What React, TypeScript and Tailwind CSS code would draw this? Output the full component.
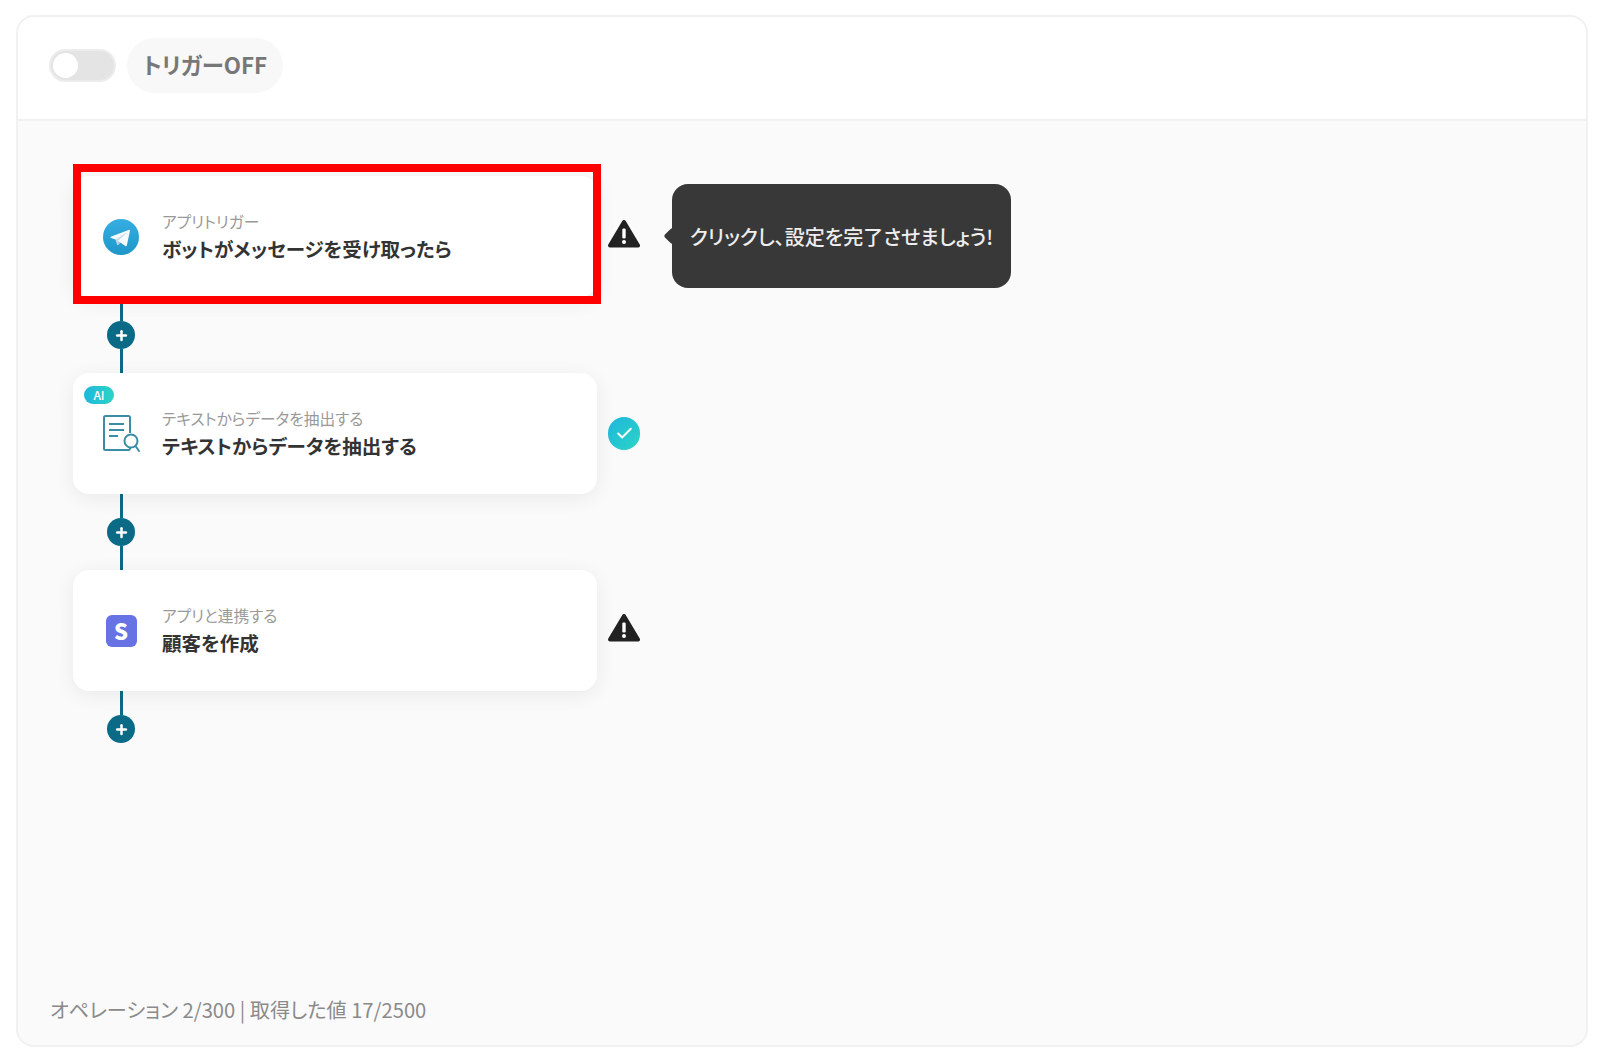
import { Check, Plus } from "lucide-react"
import type { ReactNode } from "react"

const TelegramIcon = () => (
  <svg width="36" height="36" viewBox="0 0 240 240">
    <defs>
      <linearGradient id="tg" x1="0.5" y1="0" x2="0.5" y2="1">
        <stop offset="0" stopColor="#37aee2" />
        <stop offset="1" stopColor="#1e96c8" />
      </linearGradient>
    </defs>
    <circle cx="120" cy="120" r="120" fill="url(#tg)" />
    <path fill="#c8daea" d="M98 175c-3.888 0-3.227-1.468-4.568-5.17L82 132.207 170 80" />
    <path fill="#a9c9dd" d="M98 175c3 0 4.325-1.372 6-3l16-15.558-19.958-12.035" />
    <path
      fill="#f6fbfe"
      d="M100.04 144.41l48.36 35.729c5.519 3.045 9.501 1.468 10.876-5.123l19.685-92.763c2.015-8.08-3.08-11.746-8.36-9.349l-115.59 44.571c-7.89 3.165-7.843 7.567-1.438 9.528l29.663 9.259 68.673-43.325c3.242-1.966 6.218-.91 3.776 1.258"
    />
  </svg>
)

const DocSearchIcon = () => (
  <svg width="38" height="40" viewBox="0 0 38 40" fill="none" stroke="#3d8ca5" strokeWidth="2">
    <path d="M28 19V3.500a1.500 1.500 0 0 0-1.500-1.500h-23A1.500 1.500 0 0 0 2 3.500v31A1.500 1.500 0 0 0 3.500 36h23a1.500 1.500 0 0 0 1.500-1.500V34" />
    <path d="M7 10h15M7 16h15M7 22h9" />
    <circle cx="29" cy="27" r="6.500" />
    <path d="M33.500 32L37 37" strokeLinecap="round" />
  </svg>
)

const StripeIcon = () => (
  <div className="flex h-8 w-[31px] items-center justify-center rounded-md bg-[#6772e5]">
    <span className="-mt-[2px] text-[22px] leading-none font-black text-white">S</span>
  </div>
)

const WarnIcon = () => (
  <svg width="32" height="30" viewBox="0 0 32 30">
    <path
      d="M16 3L30 26.500H2Z"
      fill="#222222"
      stroke="#222222"
      strokeWidth="4"
      strokeLinejoin="round"
    />
    <rect x="14.300" y="9.500" width="3.400" height="10" rx="1.200" fill="#ffffff" />
    <circle cx="16" cy="23" r="2" fill="#ffffff" />
  </svg>
)

const CheckBadge = () => (
  <div className="flex h-[33px] w-[33px] items-center justify-center rounded-full bg-gradient-to-br from-[#1fb6dc] to-[#2dd4c4]">
    <Check size={19} strokeWidth={2.5} className="text-white" />
  </div>
)

const Connector = ({ last }: { last?: boolean }) => (
  <div className={`ml-[34px] flex w-7 flex-col items-center ${last ? "h-[52px]" : "h-[76px]"}`}>
    <div className="h-6 w-[3px] bg-[#0b6a85]" />
    <div className="flex h-7 w-7 shrink-0 items-center justify-center rounded-full bg-[#0b6a85]">
      <Plus size={15} strokeWidth={4} className="text-white" />
    </div>
    {!last && <div className="w-[3px] flex-1 bg-[#0b6a85]" />}
  </div>
)

type StepProps = {
  icon: ReactNode
  label: string
  title: string
  badge?: boolean
  highlight?: boolean
  status: ReactNode
  children?: ReactNode
}

const Step = ({ icon, label, title, badge, highlight, status, children }: StepProps) => (
  <div className="flex items-center">
    <div className="relative flex h-[121px] w-[524px] rounded-2xl bg-white shadow-[0_4px_20px_rgba(0,0,0,0.07)]">
      {badge && (
        <div className="absolute top-[13px] left-[11px] flex h-[18px] w-[30px] items-center justify-center rounded-full bg-gradient-to-r from-[#1fb6dc] to-[#2dd4c4] text-[12px] font-medium text-white">
          AI
        </div>
      )}
      <div className="flex w-[96px] shrink-0 items-center justify-center">{icon}</div>
      <div className="-ml-[7px] pt-[35px]">
        <div className="text-[15.7px] leading-[22px] text-[#999999]">{label}</div>
        <div className="mt-[2px] text-[19.5px] leading-[27px] font-bold text-[#333333]">{title}</div>
      </div>
      {highlight && (
        <div className="pointer-events-none absolute -top-[12px] -right-[4px] -bottom-[7px] left-0 border-8 border-[#ff0000]" />
      )}
    </div>
    <div className="ml-[11px] flex w-8 justify-center">{status}</div>
    {children}
  </div>
)

const App = () => {
  return (
    <div className="h-[1058px] bg-white px-4 pt-[15px] [font-family:'Noto_Sans_CJK_JP','Noto_Sans',sans-serif] [font-feature-settings:'palt']">
      <div className="flex h-[1032px] w-[1572px] flex-col overflow-hidden rounded-[18px] border-2 border-[#f1f1f1] bg-[#fafafa]">
        <div className="flex h-[104px] shrink-0 items-center border-b-2 border-[#f1f1f1] bg-white pb-[6px] pl-[31px]">
          <div className="flex h-[33px] w-[67px] items-center rounded-full border-2 border-[#ececec] bg-[#e4e4e4] pl-[2px]">
            <div className="h-[25px] w-[25px] rounded-full bg-white" />
          </div>
          <div className="ml-[11px] flex h-[55px] w-[156px] items-center justify-center rounded-full bg-[#f8f8f8] text-[22.4px] font-bold text-[#777777]">
            トリガーOFF
          </div>
        </div>
        <div className="flex flex-1 flex-col pt-[55px] pl-[55px]">
          <Step
            icon={<TelegramIcon />}
            label="アプリトリガー"
            title="ボットがメッセージを受け取ったら"
            highlight
            status={<div className="-mt-[6px]"><WarnIcon /></div>}
          >
            <div className="relative -mt-[2px] ml-[32px] flex h-[104px] w-[339px] items-center justify-center rounded-2xl bg-[#383838] pt-[2px] text-[20px] font-medium text-[#eeeeee]">
              <div className="absolute top-1/2 -left-[6px] h-3 w-3 -translate-y-1/2 rotate-45 rounded-[2px] bg-[#383838]" />
              クリックし、設定を完了させましょう!
            </div>
          </Step>
          <Connector />
          <Step
            icon={<DocSearchIcon />}
            label="テキストからデータを抽出する"
            title="テキストからデータを抽出する"
            badge
            status={<CheckBadge />}
          />
          <Connector />
          <Step
            icon={<StripeIcon />}
            label="アプリと連携する"
            title="顧客を作成"
            status={<div className="-mt-[6px]"><WarnIcon /></div>}
          />
          <Connector last />
          <div className="mt-auto -ml-[23px] pb-[20px] text-[20.2px] leading-[30px] text-[#8a8a8a]">
            オペレーション 2/300 | 取得した値 17/2500
          </div>
        </div>
      </div>
    </div>
  )
}

export default App
